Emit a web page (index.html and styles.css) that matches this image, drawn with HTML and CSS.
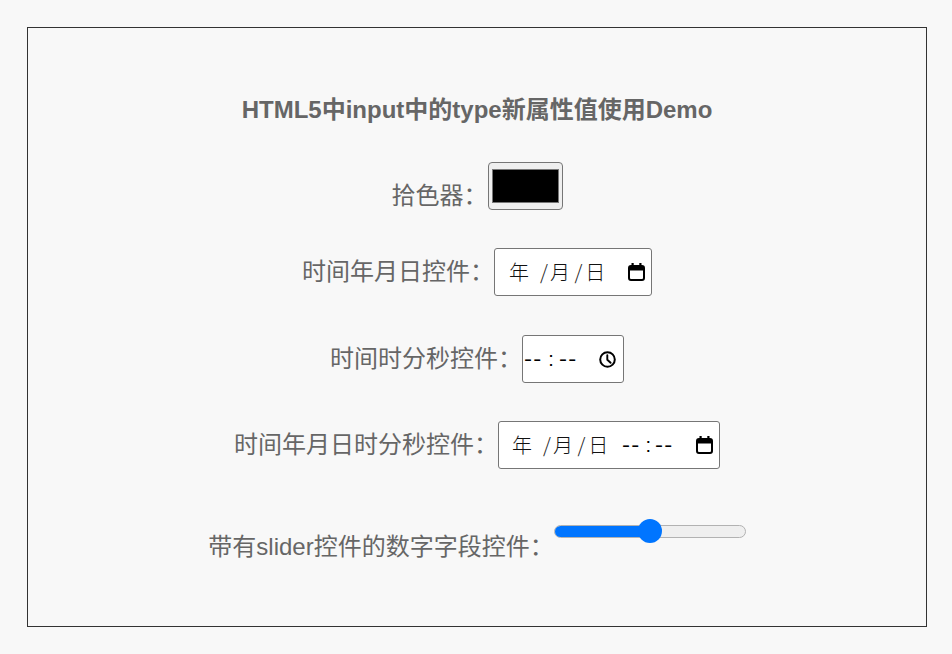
FILE: index.html
```html
<!DOCTYPE html>
<html lang="zh-CN">
<head>
<meta charset="utf-8">
<title>HTML5 input type Demo</title>
<link rel="stylesheet" href="styles.css">
</head>
<body>
<div class="frame">
  <h1 class="title">HTML5中input中的type新属性值使用Demo</h1>

  <div class="row row-bottom row-1">
    <span class="label">拾色器：</span>
    <span class="color-input"><span class="swatch"></span></span>
  </div>

  <div class="row row-2">
    <span class="label">时间年月日控件：</span>
    <span class="ctl ctl-date">
      <span class="cj f-year">年</span><span class="sl s1">/</span><span class="cj f-month">月</span><span class="sl s2">/</span><span class="cj f-day">日</span>
      <svg class="icon cal" width="17" height="18" viewBox="0 0 17 18"><rect x="3.5" y="0" width="2.2" height="3.5" fill="#000"/><rect x="11.3" y="0" width="2.2" height="3.5" fill="#000"/><rect x="1" y="3" width="15" height="14" rx="2" fill="none" stroke="#000" stroke-width="2"/><rect x="1" y="3" width="15" height="4.5" fill="#000"/></svg>
    </span>
  </div>

  <div class="row row-3">
    <span class="label">时间时分秒控件：</span>
    <span class="ctl ctl-time">
      <span class="dd">--</span><span class="colon">:</span><span class="dd dd2">--</span>
      <svg class="icon clock" width="17" height="17" viewBox="0 0 17 17"><circle cx="8.5" cy="8.5" r="7.3" fill="none" stroke="#000" stroke-width="2"/><path d="M8.3 4.2 V8.8 L11.6 11.8" fill="none" stroke="#000" stroke-width="1.9" stroke-linejoin="round" stroke-linecap="round"/></svg>
    </span>
  </div>

  <div class="row row-4">
    <span class="label">时间年月日时分秒控件：</span>
    <span class="ctl ctl-datetime">
      <span class="cj f-year">年</span><span class="sl s1">/</span><span class="cj f-month">月</span><span class="sl s2">/</span><span class="cj f-day">日</span><span class="dd dt-h">--</span><span class="colon colon-dt">:</span><span class="dd dd2-dt">--</span>
      <svg class="icon cal" width="17" height="18" viewBox="0 0 17 18"><rect x="3.5" y="0" width="2.2" height="3.5" fill="#000"/><rect x="11.3" y="0" width="2.2" height="3.5" fill="#000"/><rect x="1" y="3" width="15" height="14" rx="2" fill="none" stroke="#000" stroke-width="2"/><rect x="1" y="3" width="15" height="4.5" fill="#000"/></svg>
    </span>
  </div>

  <div class="row row-top row-5">
    <span class="label label-5">带有slider控件的数字字段控件：</span>
    <span class="range">
      <span class="track"><span class="fill" style="width: 50%"></span></span>
      <span class="thumb" style="left: 50%"></span>
    </span>
  </div>
</div>
</body>
</html>
```

FILE: styles.css
```css
html, body {
  margin: 0;
  padding: 0;
  background: #f8f8f8;
}

body {
  font-family: "Liberation Sans", "Noto Sans CJK SC", sans-serif;
  color: #666;
}

.frame {
  box-sizing: border-box;
  width: 900px;
  height: 600px;
  margin: 27px 0 0 27px;
  border: 1px solid #333;
  display: flex;
  flex-direction: column;
  align-items: center;
}

.title {
  margin: 68px 0 0 0;
  font-size: 24px;
  line-height: 28px;
  font-weight: bold;
  color: #666;
}

.row {
  display: flex;
  align-items: center;
  justify-content: center;
}

.row-bottom { align-items: flex-end; }
.row-top { align-items: flex-start; }

.row-1 { margin-top: 38px; height: 48px; }
.row-2 { margin-top: 38px; height: 48px; }
.row-3 { margin-top: 39px; height: 48px; }
.row-4 { margin-top: 38px; height: 48px; }
.row-5 { margin-top: 50px; }

.label {
  font-size: 24px;
  line-height: 28px;
  color: #666;
  white-space: nowrap;
}

.label-5 { margin-top: 14px; }

/* color picker */
.color-input {
  box-sizing: border-box;
  width: 75px;
  height: 48px;
  border: 1.5px solid #767676;
  border-radius: 4px;
  background: #efefef;
  padding: 6px 3px;
  display: flex;
}

.swatch {
  flex: 1;
  box-sizing: border-box;
  background: #000;
  border: 1.5px solid #777;
}

/* date / time controls */
.ctl {
  box-sizing: border-box;
  height: 48px;
  border: 1px solid #767676;
  border-radius: 3px;
  background: #fff;
  display: flex;
  align-items: center;
  color: #000;
  font-size: 20px;
  line-height: 24px;
}

.ctl-date { width: 158px; padding: 0 6px 0 14px; }
.ctl-time { width: 102px; padding: 0 7px 0 1px; }
.ctl-datetime { width: 222px; padding: 0 6px 0 13px; }

.cj {
  font-family: "Noto Sans CJK SC", sans-serif;
  font-weight: 300;
  width: 20px;
  text-align: center;
  color: #111;
}

.sl {
  font-family: "Noto Sans CJK SC", sans-serif;
  font-weight: 300;
  color: #222;
}
.s1 { margin-left: 11px; }
.f-month { margin-left: 2px; }
.s2 { margin-left: 4.5px; }
.f-day { margin-left: 3px; }

.dd {
  display: inline-block;
  letter-spacing: 1px;
  transform: scaleX(1.2);
  transform-origin: left center;
  font-family: "Liberation Sans", sans-serif;
}

.colon { font-family: "Liberation Sans", sans-serif; }
.ctl-time .colon { margin-left: 9px; }
.ctl-time .dd2 { margin-left: 5.5px; }

.dt-h { margin-left: 13.3px; }
.colon-dt { margin-left: 8.6px; }
.dd2-dt { margin-left: 3.5px; }

.icon {
  margin-left: auto;
  flex: none;
}

/* range slider */
.range {
  position: relative;
  width: 192px;
  height: 24px;
  display: flex;
  align-items: center;
}

.track {
  box-sizing: border-box;
  width: 100%;
  height: 13px;
  border: 1px solid #b2b2b2;
  border-radius: 7px;
  background: #efefef;
  overflow: hidden;
  display: flex;
}

.fill {
  background: #0075ff;
  height: 100%;
}

.thumb {
  position: absolute;
  top: 0;
  width: 24px;
  height: 24px;
  margin-left: -12px;
  border-radius: 50%;
  background: #0075ff;
}
```
